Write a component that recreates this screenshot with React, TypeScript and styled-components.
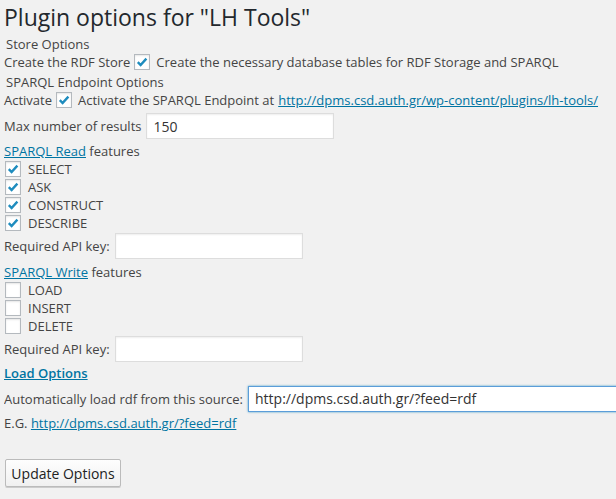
import React from "react";
import styled, { createGlobalStyle } from "styled-components";

const Global = createGlobalStyle`
  html, body { margin: 0; padding: 0; background: #f1f1f1; overflow: hidden; }
  body { font-family: "Open Sans", "Noto Sans", sans-serif; font-size: 13px; color: #444; }
`;

const Page = styled.form`
  width: 616px;
  height: 499px;
  padding: 0 0 0 4px;
  box-sizing: border-box;
  display: flex;
  flex-direction: column;
  overflow: hidden;
`;

const Title = styled.h2`
  margin: 0;
  font-size: 23px;
  font-weight: 400;
  line-height: 34px;
  height: 35px;
  color: #23282d;
  white-space: nowrap;
`;

const Section = styled.div<{ $mt?: number }>`
  height: 18px;
  line-height: 18px;
  padding-left: 2px;
  margin-top: ${(p) => p.$mt ?? 0}px;
`;

const Row = styled.div<{ $h?: number; $mt?: number; $clip?: boolean }>`
  display: flex;
  align-items: center;
  height: ${(p) => p.$h ?? 18}px;
  margin-top: ${(p) => p.$mt ?? 0}px;
  white-space: nowrap;
  overflow: ${(p) => (p.$clip ? "hidden" : "visible")};
  padding: ${(p) => (p.$clip ? "2px 0" : "0")};
`;

const Gap = styled.span<{ $w: number }>`
  display: inline-block;
  width: ${(p) => p.$w}px;
  flex: none;
`;

const Link = styled.a<{ $bold?: boolean }>`
  color: #0074a2;
  text-decoration: underline;
  font-weight: ${(p) => (p.$bold ? 600 : 400)};
  cursor: pointer;
`;

const Box = styled.span`
  display: inline-flex;
  align-items: center;
  justify-content: center;
  width: 14px;
  height: 14px;
  border: 1px solid #b4b9be;
  background: #fff;
  box-shadow: inset 0 1px 2px rgba(0, 0, 0, 0.1);
  flex: none;
`;

const Check = ({ on }: { on: boolean }) => (
  <Box>
    {on && (
      <svg width="12" height="12" viewBox="0 0 12 12">
        <path d="M1.8 6.2 L4.6 9 L10.4 2.6" fill="none" stroke="#1e8cbe" strokeWidth="2.4" />
      </svg>
    )}
  </Box>
);

const Input = styled.input<{ $w: number; $focus?: boolean }>`
  box-sizing: border-box;
  width: ${(p) => p.$w}px;
  height: 26px;
  margin: 0;
  padding: 0 6px;
  border: 1px solid ${(p) => (p.$focus ? "#5b9dd9" : "#ddd")};
  box-shadow: ${(p) =>
    p.$focus ? "0 0 2px rgba(30,140,190,0.8)" : "inset 0 1px 2px rgba(0,0,0,0.07)"};
  background: #fff;
  font-family: "Open Sans", sans-serif;
  font-size: 14px;
  color: #333;
  outline: none;
  flex: none;
`;

const Button = styled.button`
  margin-top: 27px;
  margin-left: 1px;
  align-self: flex-start;
  width: 116px;
  height: 28px;
  padding: 0;
  border: 1px solid #bbb;
  border-radius: 2px;
  background: linear-gradient(#fefefe, #f0f0f0);
  box-shadow: 0 1px 0 #ccc;
  font-family: "Open Sans", sans-serif;
  font-size: 14px;
  color: #222;
`;

const read = ["SELECT", "ASK", "CONSTRUCT", "DESCRIBE"];
const write = ["LOAD", "INSERT", "DELETE"];

export default function App() {
  return (
    <>
      <Global />
      <Page onSubmit={(e) => e.preventDefault()}>
        <Title>Plugin options for "LH Tools"</Title>
        <Section>Store Options</Section>
        <Row>
          Create the RDF Store<Gap $w={4} />
          <Check on />
          <Gap $w={6} />
          Create the necessary database tables for RDF Storage and SPARQL
        </Row>
        <Section $mt={2}>SPARQL Endpoint Options</Section>
        <Row>
          Activate<Gap $w={4} />
          <Check on />
          <Gap $w={6} />
          Activate the SPARQL Endpoint at<Gap $w={4} />
          <Link>http://dpms.csd.auth.gr/wp-content/plugins/lh-tools/</Link>
        </Row>
        <Row $h={26} $mt={4}>
          Max number of results<Gap $w={5} />
          <Input $w={188} defaultValue="150" />
        </Row>
        <Row $mt={3}>
          <Link>SPARQL Read</Link>&nbsp;features
        </Row>
        {read.map((r) => (
          <Row key={r}>
            <Gap $w={1} />
            <Check on />
            <Gap $w={7} />
            {r}
          </Row>
        ))}
        <Row $h={26} $mt={1}>
          Required API key:<Gap $w={5} />
          <Input $w={188} />
        </Row>
        <Row $mt={4}>
          <Link>SPARQL Write</Link>&nbsp;features
        </Row>
        {write.map((r) => (
          <Row key={r}>
            <Gap $w={1} />
            <Check on={false} />
            <Gap $w={7} />
            {r}
          </Row>
        ))}
        <Row $h={26} $mt={1}>
          Required API key:<Gap $w={5} />
          <Input $w={188} />
        </Row>
        <Row $mt={2}>
          <Link $bold>Load Options</Link>
        </Row>
        <Row $h={31} $mt={-1} $clip>
          Automatically load rdf from this source:<Gap $w={5} />
          <Input $w={420} $focus defaultValue="http://dpms.csd.auth.gr/?feed=rdf" />
        </Row>
        <Row $mt={-2}>
          E.G.&nbsp;<Link>http://dpms.csd.auth.gr/?feed=rdf</Link>
        </Row>
        <Button type="submit">Update Options</Button>
      </Page>
    </>
  );
}
